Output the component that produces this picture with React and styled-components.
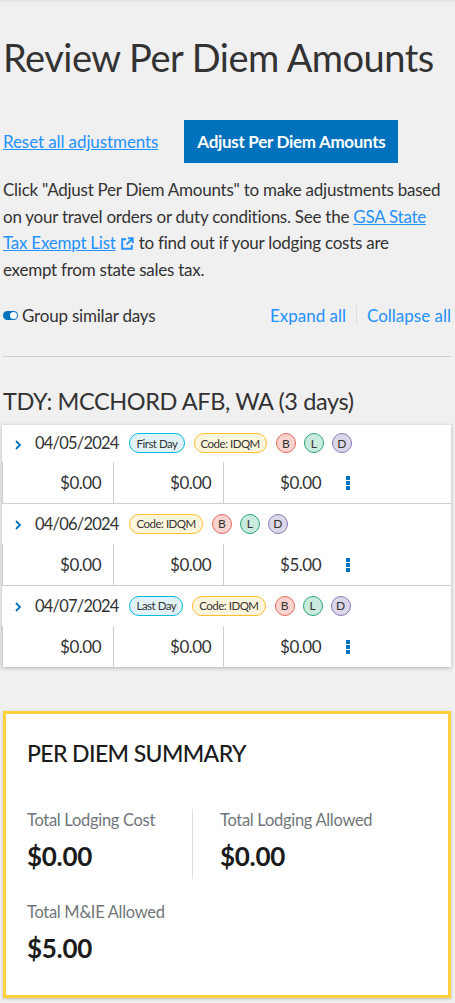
import React from "react";
import styled, { createGlobalStyle } from "styled-components";

const GlobalStyle = createGlobalStyle`
  html, body {
    margin: 0;
    padding: 0;
    background: #f0f0f0;
  }
  body {
    font-family: "Lato", "Open Sans", sans-serif;
    color: #333;
  }
  * { box-sizing: border-box; }
`;

const Page = styled.div`
  border-top: 2px solid #e4e4e4;
  padding: 0 4px 6px 3px;
  letter-spacing: -0.25px;
`;

const Title = styled.h1`
  margin: 32px 0 0;
  font-size: 38px;
  font-weight: 400;
  line-height: 46px;
  color: #333;
  letter-spacing: -0.5px;
`;

const Actions = styled.div`
  display: flex;
  align-items: center;
  gap: 26px;
  margin-top: 40px;
  letter-spacing: -0.1px;
`;

const TextLink = styled.a`
  color: #2491ff;
  text-decoration: ${(p) => (p.$plain ? "none" : "underline")};
  font-size: 17px;
  cursor: pointer;
`;

const PrimaryButton = styled.button`
  background: #0071bc;
  color: #fff;
  border: 0;
  height: 43px;
  padding: 0 13px;
  font-family: inherit;
  font-size: 17px;
  font-weight: 700;
  letter-spacing: -0.3px;
  cursor: pointer;
`;

const Intro = styled.p`
  margin: 14px 0 0;
  padding-right: 6px;
  font-size: 17px;
  line-height: 26.7px;
  color: #333;
`;

const ExtIcon = styled.svg`
  width: 14px;
  height: 14px;
  vertical-align: -2px;
  margin: 0 1px 0 4px;
`;

const Controls = styled.div`
  display: flex;
  align-items: center;
  justify-content: space-between;
  margin-top: 21px;
  padding-bottom: 30px;
  border-bottom: 1px solid #cfcfcf;
  letter-spacing: 0;
`;

const ToggleLabel = styled.label`
  display: flex;
  align-items: center;
  gap: 4px;
  font-size: 17px;
  color: #333;
  letter-spacing: -0.2px;
`;

const Toggle = styled.span`
  position: relative;
  width: 15px;
  height: 9px;
  border-radius: 5px;
  background: #0071bc;
  &::after {
    content: "";
    position: absolute;
    right: 1px;
    top: 1px;
    width: 7px;
    height: 7px;
    border-radius: 50%;
    background: #fff;
  }
`;

const LinkGroup = styled.div`
  display: flex;
  align-items: center;
`;

const Sep = styled.span`
  width: 1px;
  height: 20px;
  background: #ddd;
  margin: 0 10px;
`;

const TripTitle = styled.h2`
  margin: 29px 0 0;
  font-size: 23.5px;
  font-weight: 400;
  line-height: 30px;
  color: #333;
  letter-spacing: -0.4px;
`;

const Card = styled.div`
  margin-top: 9px;
  margin-left: -1px;
  background: #fff;
  box-shadow: 0 1px 4px rgba(0, 0, 0, 0.25);
`;

const Day = styled.div`
  & + & {
    border-top: 1px solid #cfcfcf;
  }
`;

const DayHead = styled.div`
  display: flex;
  align-items: center;
  height: ${(p) => (p.$first ? "37px" : "40px")};
  padding-left: 12px;
`;

const Chevron = styled.svg`
  width: 8px;
  height: 10px;
  margin-right: 13px;
  margin-top: 3px;
`;

const DateText = styled.span`
  font-size: 16.5px;
  letter-spacing: -0.8px;
  color: #333;
  margin-right: 11px;
`;

const Badge = styled.span`
  display: inline-flex;
  align-items: center;
  height: 20px;
  padding: 0 6px;
  border-radius: 10px;
  font-size: 11.5px;
  letter-spacing: -0.5px;
  color: #333;
  margin-right: 9px;
  background: ${(p) => (p.$kind === "code" ? "#fef6dc" : "#e1f3f8")};
  border: 1px solid ${(p) => (p.$kind === "code" ? "#ffbe2e" : "#00bde3")};
`;

const Meal = styled.span`
  display: inline-flex;
  align-items: center;
  justify-content: center;
  width: 20px;
  height: 20px;
  border-radius: 50%;
  font-size: 12px;
  color: #333;
  margin-right: 8px;
  background: ${(p) => p.$bg};
  border: 1px solid ${(p) => p.$border};
`;

const Values = styled.div`
  display: grid;
  grid-template-columns: 110px 110px 110px 1fr;
  height: 41px;
  border-left: 1px solid #cfcfcf;
`;

const Cell = styled.div`
  display: flex;
  align-items: center;
  justify-content: flex-end;
  padding-right: 12px;
  font-size: 17px;
  letter-spacing: -0.5px;
  color: #333;
  & + & {
    border-left: 1px solid #cfcfcf;
  }
`;

const MenuCell = styled.div`
  display: flex;
  align-items: center;
  padding-left: 13px;
  padding-top: 2px;
`;

const Kebab = styled.span`
  display: flex;
  flex-direction: column;
  gap: 1px;
  & > i {
    width: 4px;
    height: 4px;
    background: #0071bc;
  }
`;

const Summary = styled.section`
  margin-top: 44px;
  border: 3px solid #fdd13b;
  background: #fff;
  box-shadow: 0 1px 3px rgba(0, 0, 0, 0.2);
  padding: 23px 21px 30px;
`;

const SummaryTitle = styled.h3`
  margin: 0;
  font-size: 23px;
  font-weight: 500;
  color: #1b1b1b;
  line-height: 32px;
  letter-spacing: -0.6px;
`;

const StatGrid = styled.div`
  display: grid;
  grid-template-columns: 165px 1fr;
  margin-top: 40px;
`;

const Stat = styled.div`
  padding-left: ${(p) => (p.$second ? "27px" : "0")};
  border-left: ${(p) => (p.$second ? "1px solid #ddd" : "0")};
  padding-bottom: ${(p) => (p.$last ? "0" : "6px")};
  grid-column: ${(p) => (p.$full ? "1 / span 2" : "auto")};
  margin-top: ${(p) => (p.$full ? "22px" : "0")};
`;

const StatLabel = styled.div`
  font-size: 16.5px;
  color: #71767a;
  line-height: 22px;
  letter-spacing: -0.3px;
`;

const StatValue = styled.div`
  font-size: 26px;
  font-weight: 700;
  color: #1b1b1b;
  margin-top: 8px;
  line-height: 34px;
  letter-spacing: -0.3px;
`;

const meals = [
  { l: "B", bg: "#f8d3d0", border: "#e8685b" },
  { l: "L", bg: "#c9eadc", border: "#2aa67c" },
  { l: "D", bg: "#dcd7e8", border: "#8a79b5" },
];

const days = [
  { date: "04/05/2024", tag: "First Day", values: ["$0.00", "$0.00", "$0.00"] },
  { date: "04/06/2024", tag: null, values: ["$0.00", "$0.00", "$5.00"] },
  { date: "04/07/2024", tag: "Last Day", values: ["$0.00", "$0.00", "$0.00"] },
];

export default function App() {
  return (
    <Page>
      <GlobalStyle />
      <Title>Review Per Diem Amounts</Title>
      <Actions>
        <TextLink>Reset all adjustments</TextLink>
        <PrimaryButton>Adjust Per Diem Amounts</PrimaryButton>
      </Actions>
      <Intro>
        Click "Adjust Per Diem Amounts" to make adjustments based on your travel
        orders or duty conditions. See the{" "}
        <TextLink>
          GSA State Tax Exempt List
          <ExtIcon viewBox="0 0 16 16" fill="none" stroke="#2491ff" strokeWidth="2.2">
            <path d="M7 2.5H2.5v11h11V9" />
            <path d="M9 1.5h5.5V7M14.5 1.5L7.5 8.5" />
          </ExtIcon>
        </TextLink>{" "}
        to find out if your lodging costs are exempt from state sales tax.
      </Intro>
      <Controls>
        <ToggleLabel>
          <Toggle />
          Group similar days
        </ToggleLabel>
        <LinkGroup>
          <TextLink $plain>Expand all</TextLink>
          <Sep />
          <TextLink $plain>Collapse all</TextLink>
        </LinkGroup>
      </Controls>
      <TripTitle>TDY: MCCHORD AFB, WA (3 days)</TripTitle>
      <Card>
        {days.map((d, i) => (
          <Day key={d.date}>
            <DayHead $first={i === 0}>
              <Chevron viewBox="0 0 8 10" fill="none" stroke="#0071bc" strokeWidth="1.8">
                <path d="M2 1l4 4-4 4" />
              </Chevron>
              <DateText>{d.date}</DateText>
              {d.tag && <Badge>{d.tag}</Badge>}
              <Badge $kind="code">Code: IDQM</Badge>
              {meals.map((m) => (
                <Meal key={m.l} $bg={m.bg} $border={m.border}>
                  {m.l}
                </Meal>
              ))}
            </DayHead>
            <Values>
              {d.values.map((v, j) => (
                <Cell key={j}>{v}</Cell>
              ))}
              <MenuCell>
                <Kebab>
                  <i />
                  <i />
                  <i />
                </Kebab>
              </MenuCell>
            </Values>
          </Day>
        ))}
      </Card>
      <Summary>
        <SummaryTitle>PER DIEM SUMMARY</SummaryTitle>
        <StatGrid>
          <Stat>
            <StatLabel>Total Lodging Cost</StatLabel>
            <StatValue>$0.00</StatValue>
          </Stat>
          <Stat $second>
            <StatLabel>Total Lodging Allowed</StatLabel>
            <StatValue>$0.00</StatValue>
          </Stat>
          <Stat $full $last>
            <StatLabel>Total M&amp;IE Allowed</StatLabel>
            <StatValue>$5.00</StatValue>
          </Stat>
        </StatGrid>
      </Summary>
    </Page>
  );
}
